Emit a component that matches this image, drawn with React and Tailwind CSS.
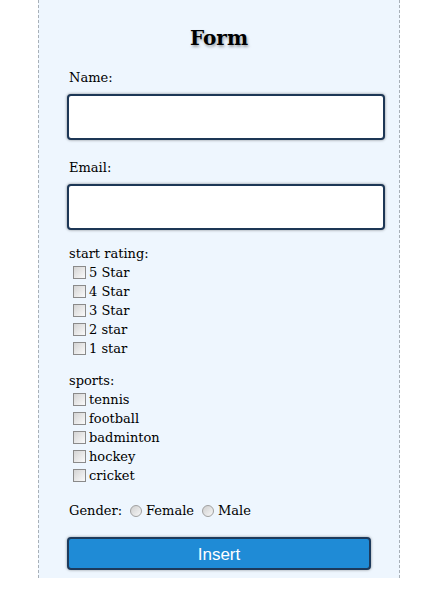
import React from "react";

const stars = ["5 Star", "4 Star", "3 Star", "2 star", "1 star"];
const sports = ["tennis", "football", "badminton", "hockey", "cricket"];

function Check({ label }) {
  return (
    <label className="flex h-[19px] items-center pl-[6px]">
      <input
        type="checkbox"
        className="m-0 h-[13px] w-[13px] shrink-0 appearance-none border border-[#8a8a8a] bg-gradient-to-br from-[#d4d4d4] to-[#fafafa]"
      />
      <span className="ml-[3px]">{label}</span>
    </label>
  );
}

function Radio({ label }) {
  return (
    <label className="flex items-center">
      <input
        type="radio"
        name="gender"
        className="m-0 h-[12px] w-[12px] shrink-0 appearance-none rounded-full border border-[#a0a0a0] bg-gradient-to-br from-[#cfcfcf] to-[#f7f7f7]"
      />
      <span className="ml-[4px]">{label}</span>
    </label>
  );
}

export default function App() {
  return (
    <div className="min-h-screen bg-white">
      <div
        className="ml-[38px] w-[362px] border-x border-dashed border-[#a8b0b8] bg-[#eef6fe] pb-[8px] text-[13px] leading-[19px] text-black"
        style={{ fontFamily: '"DejaVu Serif", serif' }}
      >
        <h1 className="pt-[25px] text-center text-[20px] font-bold leading-[26px] [text-shadow:1px_2px_3px_rgba(0,0,0,0.35)]">
          Form
        </h1>

        <form className="pl-[28px] pt-[17px]">
          <div className="pl-[2px]">Name:</div>
          <input
            type="text"
            className="mt-[7px] block h-[46px] w-[318px] rounded-[4px] border-2 border-[#1d3756] bg-white shadow-[0_0_3px_rgba(0,0,0,0.45)] outline-none"
          />

          <div className="mt-[18px] pl-[2px]">Email:</div>
          <input
            type="email"
            className="mt-[7px] block h-[46px] w-[318px] rounded-[4px] border-2 border-[#1d3756] bg-white shadow-[0_0_3px_rgba(0,0,0,0.45)] outline-none"
          />

          <div className="mt-[14px] pl-[2px]">start rating:</div>
          {stars.map((s) => (
            <Check key={s} label={s} />
          ))}

          <div className="mt-[13px] pl-[2px]">sports:</div>
          {sports.map((s) => (
            <Check key={s} label={s} />
          ))}

          <div className="mt-[16px] flex items-center pl-[2px]">
            <span className="mr-[8px]">Gender:</span>
            <Radio label="Female" />
            <span className="w-[8px]" />
            <Radio label="Male" />
          </div>

          <button
            type="button"
            className="mt-[17px] block h-[33px] w-[304px] rounded-[4px] border-2 border-[#1d3a5c] bg-[#1f8bd6] pt-[2px] text-[17px] text-white shadow-[0_0_3px_rgba(0,0,0,0.4)]"
            style={{ fontFamily: '"Liberation Sans", Arial, sans-serif' }}
          >
            Insert
          </button>
        </form>
      </div>
    </div>
  );
}
